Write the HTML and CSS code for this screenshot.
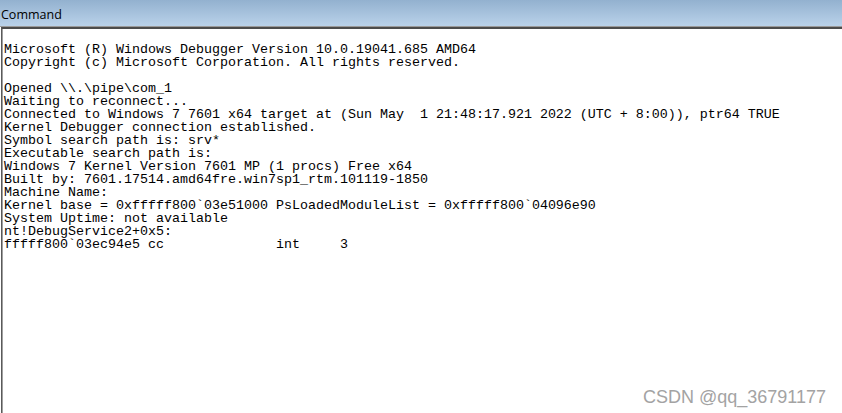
FILE: index.html
```html
<!DOCTYPE html>
<html lang="en">
<head>
  <meta charset="UTF-8">
  <meta name="viewport" content="width=device-width, initial-scale=1.0">
  <title>Command</title>
  <link rel="stylesheet" href="styles.css">
</head>
<body>
  <div class="window">
    <div class="titlebar">Command</div>
    <div class="console">
<pre class="output">Microsoft (R) Windows Debugger Version 10.0.19041.685 AMD64
Copyright (c) Microsoft Corporation. All rights reserved.

Opened \\.\pipe\com_1
Waiting to reconnect...
Connected to Windows 7 7601 x64 target at (Sun May  1 21:48:17.921 2022 (UTC + 8:00)), ptr64 TRUE
Kernel Debugger connection established.
Symbol search path is: srv*
Executable search path is:
Windows 7 Kernel Version 7601 MP (1 procs) Free x64
Built by: 7601.17514.amd64fre.win7sp1_rtm.101119-1850
Machine Name:
Kernel base = 0xfffff800`03e51000 PsLoadedModuleList = 0xfffff800`04096e90
System Uptime: not available
nt!DebugService2+0x5:
fffff800`03ec94e5 cc              int     3</pre>
    </div>
  </div>
  <div class="watermark">CSDN @qq_36791177</div>
</body>
</html>
```

FILE: styles.css
```css
body {
  margin: 0;
  padding: 0;
  width: 842px;
  height: 413px;
  overflow: hidden;
  position: relative;
  background: #ffffff;
}

.window {
  display: flex;
  flex-direction: column;
  height: 100%;
}

.titlebar {
  height: 26px;
  line-height: 30px;
  padding-left: 1px;
  font-family: "Open Sans", "Noto Sans", sans-serif;
  font-size: 12.5px;
  color: #000;
  background: linear-gradient(to bottom, #93b1cf, #bad2ea);
  border-bottom: 1px solid #9a9a9a;
  overflow: hidden;
}

/* sunken console pane */
.console {
  flex: 1;
  margin-left: 1px;
  border-top: 2px solid #4c4c4c;
  border-left: 1px solid #5a5a5a;
  box-shadow: inset 1px 0 0 #a0a0a0;
  padding: 14px 0 0 2px;
}

.output {
  margin: 0;
  font-family: "Liberation Mono", monospace;
  font-size: 13.33px;
  line-height: 13px;
  color: #000;
}

.watermark {
  position: absolute;
  right: 16px;
  bottom: 5px;
  font-family: "Liberation Sans", Arial, sans-serif;
  font-size: 18px;
  color: #a3a3a3;
  text-shadow: 0 0 1px #fff;
}
```
